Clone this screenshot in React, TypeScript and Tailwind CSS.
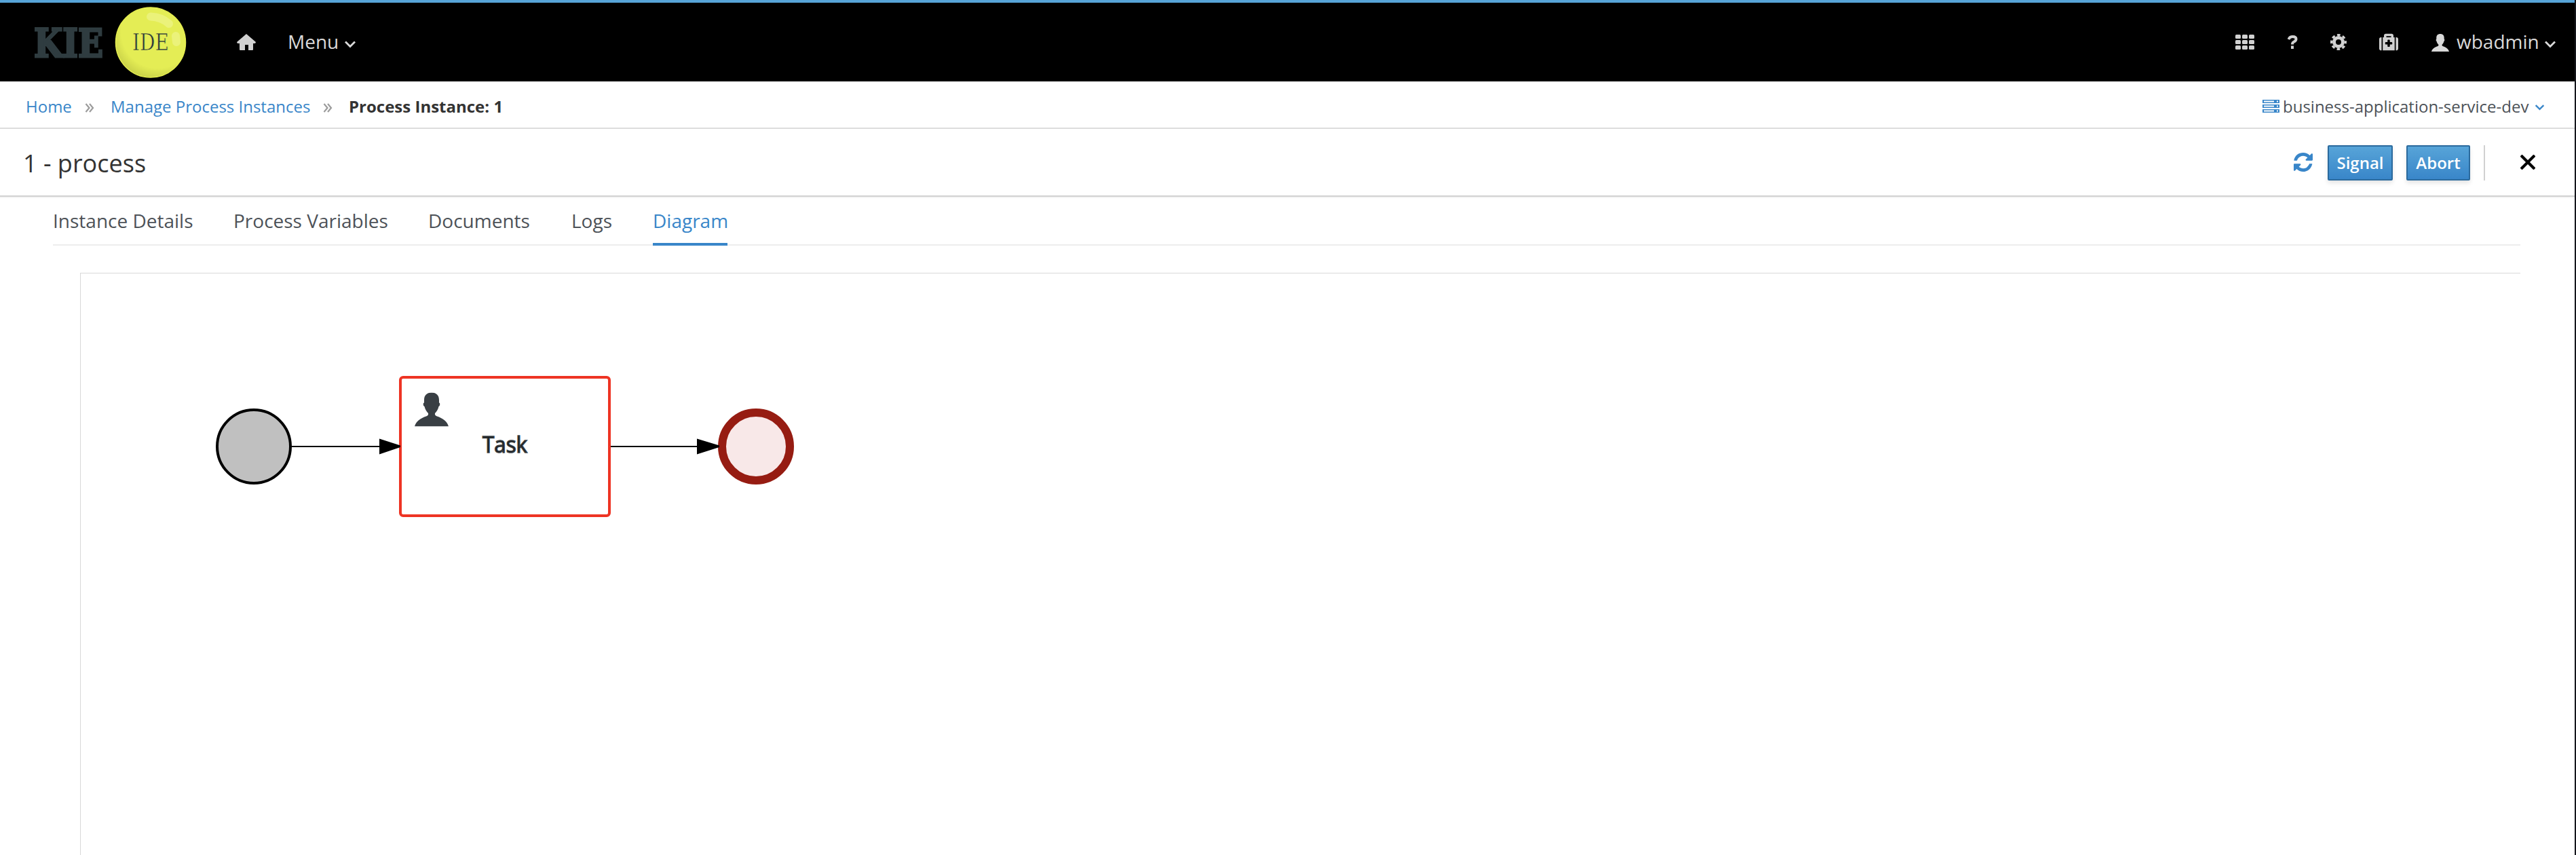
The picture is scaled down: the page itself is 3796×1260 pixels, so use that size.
import React from "react";
import { FaMedkit } from "react-icons/fa";

const CHEVRON = "M2 2.5 L9 9.5 L16 2.5";
const USER =
  "M25 0 C18 0 14 4 14 11 L14 15 C12 15 12.500 20 14.500 20.500 C15.500 25 18 28.500 20 30.500 C20.500 33 19.500 34 17 35 C9 37.500 1.500 43 0 50 L50 50 C48.500 43 41 37.500 33 35 C30.500 34 29.500 33 30 30.500 C32 28.500 34.500 25 35.500 20.500 C37.500 20 38 15 36 15 L36 11 C36 4 32 0 25 0 Z";

function Chevron({ className }: { className: string }) {
  return (
    <svg viewBox="0 0 18 12" className={className} fill="none" stroke="currentColor" strokeWidth="2.8">
      <path d={CHEVRON} />
    </svg>
  );
}

function UserIcon({ className }: { className: string }) {
  return (
    <svg viewBox="0 0 50 50" className={className} fill="currentColor" preserveAspectRatio="none">
      <path d={USER} />
    </svg>
  );
}

function Logo() {
  return (
    <svg viewBox="0 0 230 110" className="ml-[48px] h-[110px] w-[230px] shrink-0">
      <defs>
        <radialGradient id="ball" cx="0.6" cy="0.35" r="0.72">
          <stop offset="0.72" stopColor="#e4ed55" />
          <stop offset="1" stopColor="#c3cb45" />
        </radialGradient>
      </defs>
      <text x="2" y="76.500" textLength="102" lengthAdjust="spacingAndGlyphs" fontFamily="DejaVu Serif" fontWeight="700" fontSize="57" fill="#2f3c40" stroke="#2f3c40" strokeWidth="3">
        KIE
      </text>
      <circle cx="174" cy="55.500" r="51.500" fill="url(#ball)" stroke="#e6ef4f" strokeWidth="1.500" />
      <path d="M174 17.500 Q190 18 201 28" fill="none" stroke="#ebf27a" strokeWidth="12" strokeLinecap="round" />
      <path d="M211 46 L212 55" fill="none" stroke="#ebf27a" strokeWidth="12" strokeLinecap="round" />
      <text x="147" y="67" textLength="54" lengthAdjust="spacingAndGlyphs" fontFamily="DejaVu Serif" fontSize="33" fill="#26343c" stroke="#e4ed55" strokeWidth="0.6">
        IDE
      </text>
    </svg>
  );
}

function Sep() {
  return (
    <svg viewBox="0 0 14 14" className="mt-[5px] h-[14px] w-[14px] shrink-0" fill="none" stroke="#9c9c9c" strokeWidth="2.2">
      <path d="M1.500 1 L6.500 7 L1.500 13 M7 1 L12 7 L7 13" />
    </svg>
  );
}

function Diagram() {
  return (
    <svg viewBox="119 403 1200 857" className="h-[857px] w-[1200px]">
      <circle cx="374" cy="658" r="54" fill="#c0c0c0" stroke="#000" strokeWidth="4" />
      <path d="M430 658 H562 M900 658 H1030" stroke="#000" strokeWidth="2" />
      <rect x="590" y="556" width="308" height="204" rx="4" fill="#fff" stroke="#ee3424" strokeWidth="4" />
      <circle cx="1114" cy="658" r="50" fill="#f8e8e8" stroke="#961c12" strokeWidth="12" />
      <path d="M559 646.500 L590 656.500 V659 L559 669.500 Z M1027 646.500 L1060 656.500 V659 L1027 669.500 Z" />
      <svg x="611" y="578.500" width="50" height="50" viewBox="0 0 50 50" fill="#393f44">
        <path d={USER} />
      </svg>
      <text x="711" y="667" textLength="66" lengthAdjust="spacingAndGlyphs" fontFamily="Open Sans" fontSize="32" fill="#111" stroke="#393f44" strokeWidth="1.500">
        Task
      </text>
    </svg>
  );
}

const tabs = [
  { label: "Instance Details", cls: "ml-0 w-[206px]" },
  { label: "Process Variables", cls: "ml-[60px] w-[227px]" },
  { label: "Documents", cls: "ml-[60px] w-[151px]" },
  { label: "Logs", cls: "ml-[60px] w-[60px]" },
];

export default function App() {
  return (
    <div className="flex h-[1260px] w-[3796px] overflow-hidden bg-white font-['Open_Sans',sans-serif] text-[#333]">
      <div className="flex min-w-0 flex-1 flex-col">
        <header className="flex h-[120px] shrink-0 items-center border-t-4 border-[#57a4d8] bg-black whitespace-nowrap text-[28px] text-[#d9d9d9]">
          <Logo />
          <svg viewBox="0 0 28 24" className="ml-[71px] h-6 w-7" fill="#d1d1d1">
            <path d="M14 0 L28 12 Q28 14 26 14 H24 V23 Q24 24 23 24 H17 V16 H12 V24 H5 Q4 24 4 23 V14 H2 Q0 14 0 12 Z" />
          </svg>
          <span className="mb-[2px] ml-[47px] w-[76px]">Menu</span>
          <Chevron className="mt-[5px] ml-[7px] h-3 w-[18px]" />
          <div className="flex-1" />
          <svg viewBox="0 0 28 22" className="h-[22px] w-7" fill="#d1d1d1">
            {[0, 8, 16].map((y) =>
              [0, 10, 20].map((x) => <rect key={x + "-" + y} x={x} y={y} width="8" height="6" rx="1.500" />)
            )}
          </svg>
          <svg viewBox="0 0 15 20" className="ml-[49px] h-5 w-[15px]" fill="none" stroke="#d1d1d1" strokeWidth="4">
            <path d="M1.500 6 Q3 2 7.500 2 Q12.500 2 12.500 5.500 Q12.500 8 9.500 9.500 Q7 10.500 7 13.500 M7 15.500 V20" />
          </svg>
          <svg viewBox="0 0 24 24" className="ml-[48px] h-6 w-6" fill="none" stroke="#d1d1d1">
            <circle cx="12" cy="12" r="6.500" strokeWidth="5" />
            <circle cx="12" cy="12" r="10.400" strokeWidth="3.200" strokeDasharray="4.600 3.568" strokeDashoffset="2.300" />
          </svg>
          <FaMedkit className="ml-[48px] h-7 w-7 text-[#d1d1d1]" />
          <UserIcon className="mt-[2px] ml-[49px] h-[26px] w-[26px]" />
          <span className="mb-[2px] ml-[11px] w-[122px]">wbadmin</span>
          <Chevron className="mt-[5px] mr-[27px] ml-[7px] h-3 w-[18px]" />
        </header>

        <nav className="flex h-[70px] shrink-0 items-center border-b-2 border-[#dddddd] pt-[5px] whitespace-nowrap text-[24px] text-[#3986c9]">
          <span className="ml-[38px] w-[68px]">Home</span>
          <span className="ml-[19px]"><Sep /></span>
          <span className="ml-[24px] w-[294px]">Manage Process Instances</span>
          <span className="ml-[19px]"><Sep /></span>
          <span className="ml-[24px] font-bold text-[#333]">Process Instance: 1</span>
          <div className="flex-1" />
          <svg viewBox="0 0 25 19" className="h-[19px] w-[25px]">
            {[0, 7, 14].map((y) => (
              <g key={y}>
                <rect y={y} width="25" height="5" fill="#3986c9" />
                <rect x="2" y={y + 1.5} width="15" height="2" fill="#fff" />
                <rect x="21" y={y + 1.5} width="2" height="2" fill="#fff" />
              </g>
            ))}
          </svg>
          <span className="ml-[5px] w-[363px] text-[#4d5258]">business-application-service-dev</span>
          <Chevron className="mt-[2px] mr-[44px] ml-[8px] h-[10px] w-[15px]" />
        </nav>

        <section className="flex h-[100px] shrink-0 items-center border-b-2 border-[#d1d1d1] pt-[2px] whitespace-nowrap">
          <h1 className="mt-[2px] ml-[34px] text-[36px]">1 - process</h1>
          <div className="flex-1" />
          <svg viewBox="0 0 512 512" className="mb-[2px] h-7 w-7" fill="#3986c9">
            <path d="M440 293 c0 1 0 3 0 4 C407 431 300 512 256 512 C190 512 127 486 79 440 L36 483 C21 498 0 488 0 469 V320 C0 309 9 299 21 299 H170 C189 299 199 322 185 335 L139 381 C171 411 212 427 256 427 C315 427 370 396 401 346 C409 333 413 320 419 307 C420 302 424 299 429 299 H493 C499 299 500 304 499 309 C466 440 365 512 256 512" />
            <path d="M512 43 V192 C512 204 503 213 491 213 H342 C323 213 313 190 327 177 L373 131 C341 101 300 85 256 85 C197 85 142 115 111 165 C103 178 99 191 93 204 C92 209 88 213 83 213 H17 C11 213 6 208 6 203 V200 C38 66 134 0 256 0 C322 0 386 26 433 72 L476 29 C490 15 512 24 512 43 Z" />
          </svg>
          <button className="ml-[22px] h-[52px] w-[96px] rounded-[2px] border-2 border-[#2b6a9d] bg-linear-to-b from-[#57a4d8] to-[#3986c9] text-[24px] leading-[46px] font-semibold text-white shadow-[0_4px_6px_rgba(3,3,3,0.1)]">Signal</button>
          <button className="ml-[20px] h-[52px] w-[94px] rounded-[2px] border-2 border-[#2b6a9d] bg-linear-to-b from-[#57a4d8] to-[#3986c9] text-[24px] leading-[46px] font-semibold text-white shadow-[0_4px_6px_rgba(3,3,3,0.1)]">Abort</button>
          <div className="ml-[20px] h-[52px] w-[2px] bg-[#d1d1d1]" />
          <svg viewBox="0 0 22 22" className="mr-[58px] mb-[2px] ml-[52px] h-[22px] w-[22px]" fill="none" stroke="#030303" strokeWidth="4.200" strokeLinecap="square">
            <path d="M2.500 2.500 L19.500 19.500 M19.500 2.500 L2.500 19.500" />
          </svg>
        </section>
        <div className="h-[2px] shrink-0 bg-[#f5f5f5]" />

        <div className="mr-[80px] ml-[78px] flex h-[70px] shrink-0 border-b-2 border-[#ededed] whitespace-nowrap text-[28px] leading-[66px] text-[#4d5258]">
          {tabs.map((t) => (
            <span key={t.label} className={t.cls}>{t.label}</span>
          ))}
          <span className="ml-[60px] h-[70px] w-[110px] border-b-4 border-[#3986c9] text-[#3986c9]">Diagram</span>
        </div>

        <main className="mt-10 mr-[80px] ml-[118px] flex-1 border-t border-l border-[#d8d8d8]">
          <Diagram />
        </main>
      </div>
      <div className="w-[2px] shrink-0 bg-[#15161c]" />
    </div>
  );
}
